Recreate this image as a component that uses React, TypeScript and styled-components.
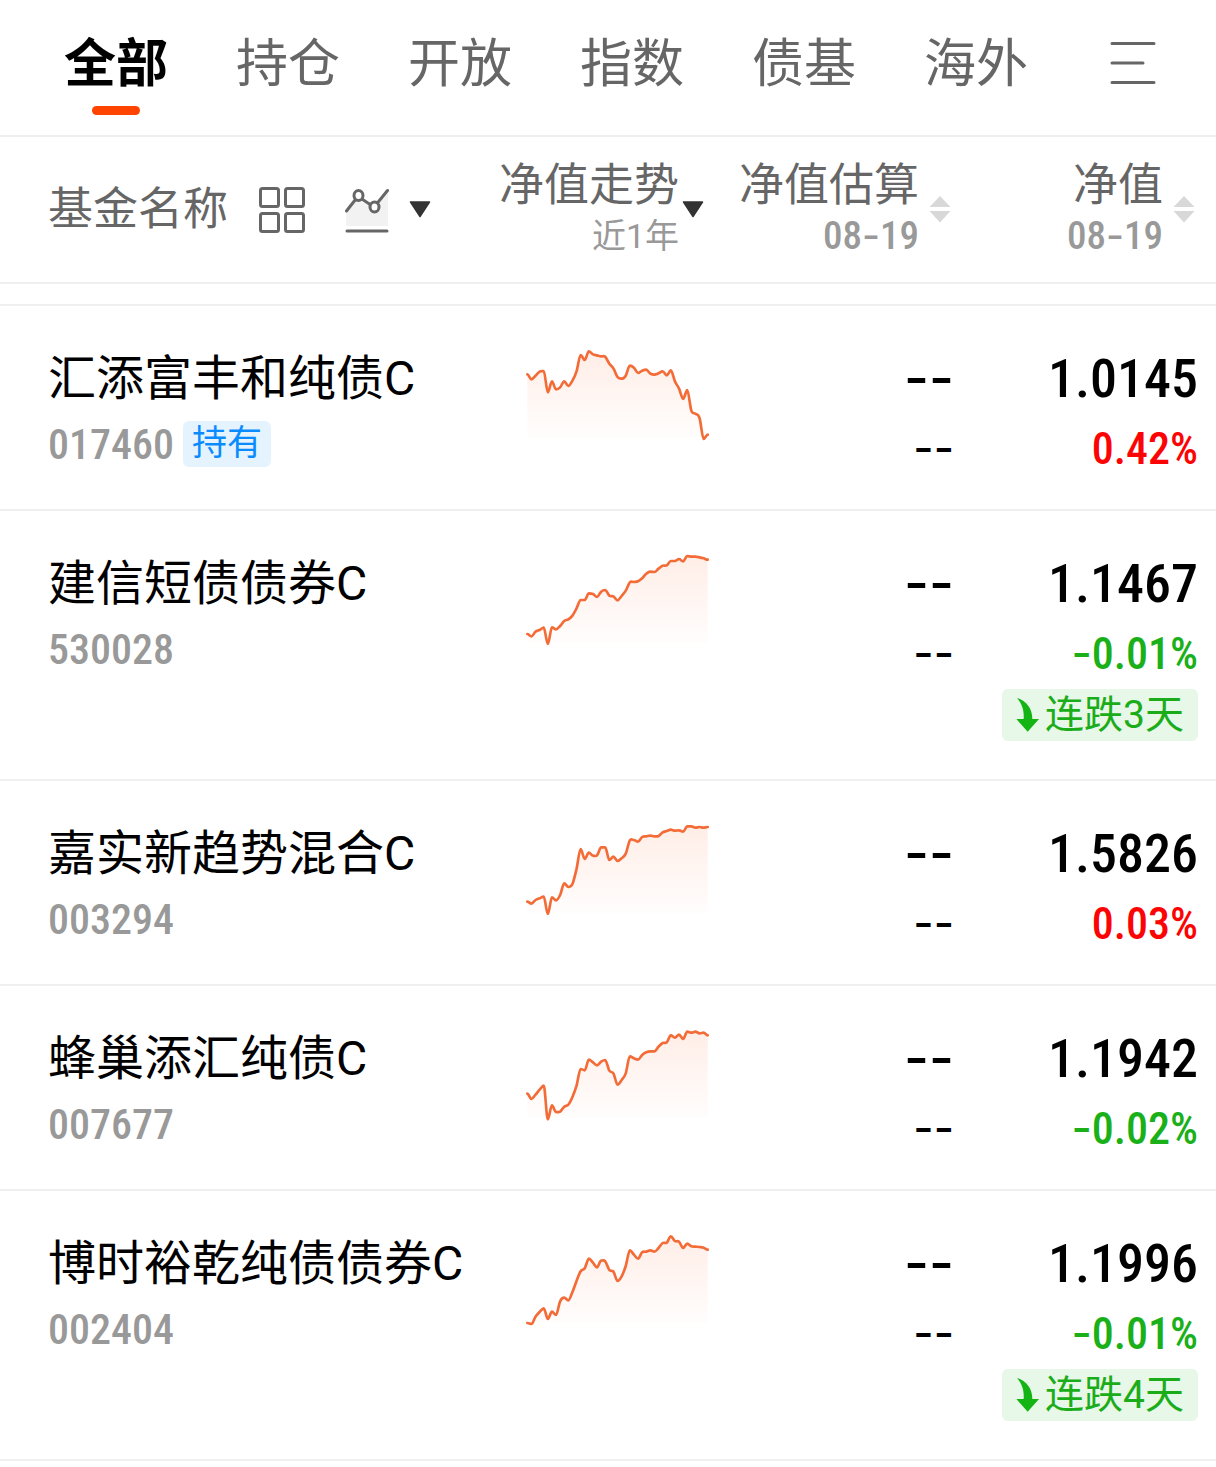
import React from "react";
import styled, { createGlobalStyle } from "styled-components";

const numeric = `"Roboto Condensed", "Liberation Sans Narrow", "Noto Sans CJK SC", sans-serif`;
const sans = `Roboto, "Noto Sans CJK SC", sans-serif`;

const GlobalStyle = createGlobalStyle`
  *, *::before, *::after { box-sizing: border-box; }
  body {
    margin: 0;
    background: #fff;
    color: #000;
    font-family: ${sans};
  }
  button {
    margin: 0;
    padding: 0;
    border: 0;
    background: none;
    color: inherit;
    font: inherit;
    cursor: pointer;
  }
`;

const Tabs = styled.nav`
  display: flex;
  align-items: flex-start;
  height: 137px;
  padding: 25px 60px 0 30px;
  border-bottom: 2px solid #efefef;
`;

const Tab = styled.button<{ $active?: boolean }>`
  flex: 0 0 172px;
  display: flex;
  flex-direction: column;
  align-items: center;
  gap: 1px;
  color: ${(p) => (p.$active ? "#000" : "#666")};
  font-size: 52px;
  font-weight: ${(p) => (p.$active ? 700 : 400)};
  line-height: 80px;

  &::after {
    content: "";
    width: 48px;
    height: 9px;
    border-radius: 5px;
    background: ${(p) => (p.$active ? "#ff4400" : "transparent")};
  }
`;

const MenuButton = styled.button`
  display: flex;
  margin: 16px 0 0 auto;
`;

const Table = styled.table`
  display: block;
`;

const Head = styled.thead`
  display: block;
  margin-bottom: 20px;
  border-bottom: 2px solid #efefef;
`;

const Body = styled.tbody`
  display: block;
  border-top: 2px solid #efefef;
`;

const columns = `
  display: grid;
  grid-template-columns: minmax(0, 1fr) 226px 246px 262px;
`;

const HeadRow = styled.tr`
  ${columns}
  height: 145px;
`;

const Row = styled.tr`
  ${columns}
  padding: 38px 0 25px;
  border-bottom: 2px solid #efefef;
`;

const NameHead = styled.th`
  display: flex;
  align-items: center;
  padding-left: 48px;
  color: #666;
  font-size: 45px;
  font-weight: 400;
  line-height: 52px;
`;

const IconButton = styled.button<{ $gap: number }>`
  display: flex;
  align-items: center;
  gap: 20px;
  margin-left: ${(p) => p.$gap}px;
`;

const ColumnHead = styled.th<{ $right: number }>`
  display: flex;
  justify-content: flex-end;
  align-items: center;
  padding-right: ${(p) => p.$right}px;
  font-weight: 400;
`;

const SortButton = styled.button<{ $gap: number }>`
  display: flex;
  align-items: center;
  gap: ${(p) => p.$gap}px;
  text-align: right;
  white-space: nowrap;
`;

const HeadText = styled.span`
  display: flex;
  flex-direction: column;
`;

const HeadTitle = styled.span`
  color: #666;
  font-size: 45px;
  line-height: 52px;
`;

const HeadSub = styled.span<{ $numeric?: boolean }>`
  color: #999;
  font-family: ${(p) => (p.$numeric ? numeric : sans)};
  font-size: ${(p) => (p.$numeric ? 39 : 34)}px;
  font-weight: ${(p) => (p.$numeric ? 500 : 400)};
  line-height: 48px;
`;

const NameCell = styled.th`
  padding: 0 0 0 48px;
  font-weight: 400;
  text-align: left;
  white-space: nowrap;
`;

const FundName = styled.div`
  font-size: 48px;
  line-height: 70px;
`;

const CodeLine = styled.div`
  display: flex;
  align-items: center;
  gap: 9px;
  height: 60px;
`;

const Code = styled.span`
  color: #999;
  font-family: ${numeric};
  font-size: 42px;
  font-weight: 500;
`;

const HoldBadge = styled.span`
  padding: 0 9px;
  border-radius: 6px;
  background: #e5f3ff;
  color: #0a8cff;
  font-size: 35px;
  line-height: 46px;
`;

const ChartCell = styled.td`
  padding: 4px 0 0 45px;
`;

const ChartSvg = styled.svg`
  display: block;
  overflow: visible;
`;

const ValueCell = styled.td<{ $right?: number }>`
  display: flex;
  flex-direction: column;
  align-items: flex-end;
  padding: 0 ${(p) => p.$right ?? 0}px 0 0;
  font-family: ${numeric};
  font-weight: 500;
`;

const Value = styled.span`
  font-size: 54px;
  line-height: 70px;
`;

const Change = styled.span<{ $color?: string }>`
  color: ${(p) => p.$color ?? "#000"};
  font-size: 44px;
  line-height: 70px;
`;

const Dash = styled.span`
  font-family: Inter, sans-serif;
  line-height: 0;
`;

const StreakTag = styled.span`
  display: flex;
  align-items: center;
  gap: 5px;
  height: 52px;
  margin-bottom: 13px;
  padding: 0 14px 0 14px;
  border-radius: 6px;
  background: #e7f7e8;
  color: #1aad19;
  font-family: ${sans};
  font-size: 39px;
  font-weight: 400;
  line-height: 52px;
`;

type Fund = {
  name: string;
  code: string;
  held?: boolean;
  value: string;
  change: string;
  streak?: string;
  trend: number[];
};

const funds: Fund[] = [
  {
    name: "汇添富丰和纯债C", code: "017460", held: true, value: "1.0145", change: "0.42%",
    trend: [118, 133, 122, 110, 108, 172, 139, 163, 157, 139, 153, 137, 109, 60, 75, 49, 58, 61, 64, 65, 86, 100, 126, 131, 122, 92, 98, 114, 107, 104, 116, 119, 115, 109, 121, 106, 139, 161, 192, 165, 227, 236, 249, 312, 299],
  },
  {
    name: "建信短债债券C", code: "530028", value: "1.1467", change: "-0.01%", streak: "连跌3天",
    trend: [282, 289, 275, 270, 263, 312, 262, 268, 258, 243, 238, 227, 205, 180, 180, 160, 162, 171, 155, 150, 167, 169, 181, 168, 152, 127, 126, 124, 115, 101, 95, 96, 86, 77, 76, 63, 63, 57, 64, 48, 50, 50, 52, 55, 59],
  },
  {
    name: "嘉实新趋势混合C", code: "003294", value: "1.5826", change: "0.03%",
    trend: [275, 281, 270, 265, 260, 312, 262, 271, 255, 220, 231, 222, 177, 117, 147, 128, 137, 136, 112, 112, 150, 140, 153, 145, 131, 91, 90, 95, 81, 79, 77, 79, 78, 67, 63, 59, 62, 61, 65, 49, 49, 53, 51, 53, 51],
  },
  {
    name: "蜂巢添汇纯债C", code: "007677", value: "1.1942", change: "-0.02%",
    trend: [236, 252, 239, 224, 212, 313, 271, 291, 290, 275, 269, 246, 212, 162, 166, 134, 142, 151, 140, 135, 167, 175, 209, 195, 175, 124, 130, 134, 120, 112, 109, 109, 95, 84, 82, 61, 68, 59, 72, 50, 53, 50, 55, 53, 61],
  },
  {
    name: "博时裕乾纯债债券C", code: "002404", value: "1.1996", change: "-0.01%", streak: "连跌4天",
    trend: [309, 312, 290, 276, 265, 297, 275, 285, 244, 233, 241, 216, 183, 154, 145, 116, 128, 142, 122, 124, 150, 155, 183, 169, 138, 91, 104, 116, 97, 95, 91, 95, 84, 69, 68, 49, 63, 65, 84, 71, 79, 80, 81, 83, 89],
  },
];

const STEP = 12.3;

function smoothLine(ys: number[]) {
  const slopes = ys.map((y, i) => {
    if (i === 0 || i === ys.length - 1) return 0;
    const before = y - ys[i - 1];
    const after = ys[i + 1] - y;
    return before * after <= 0 ? 0 : (before + after) / 2;
  });
  let path = `M0 ${ys[0]}`;
  for (let i = 1; i < ys.length; i++) {
    const x0 = (i - 1) * STEP;
    const x1 = i * STEP;
    const h = STEP / 3;
    path += `C${x0 + h} ${ys[i - 1] + slopes[i - 1] / 3} ${x1 - h} ${ys[i] - slopes[i] / 3} ${x1} ${ys[i]}`;
  }
  return path;
}

function TrendChart({ id, points }: { id: string; points: number[] }) {
  const line = smoothLine(points);
  const end = (points.length - 1) * STEP;
  return (
    <ChartSvg width="182" height="92" viewBox="-1 39 546 276" aria-hidden="true">
      <defs>
        <linearGradient id={id} x1="0" y1="45" x2="0" y2="310" gradientUnits="userSpaceOnUse">
          <stop offset="0" stopColor="#ff6a33" stopOpacity="0.12" />
          <stop offset="1" stopColor="#ff6a33" stopOpacity="0.01" />
        </linearGradient>
      </defs>
      <path d={`${line}L${end} 310L0 310Z`} fill={`url(#${id})`} />
      <path d={line} fill="none" stroke="#f36c37" strokeWidth="8" strokeLinecap="round" strokeLinejoin="round" />
    </ChartSvg>
  );
}

function Down() {
  return (
    <svg width="22" height="17" viewBox="0 0 22 17" aria-hidden="true">
      <path d="M1.5 1h19L11 15.5z" fill="#333" stroke="#333" strokeWidth="1.5" strokeLinejoin="round" />
    </svg>
  );
}

function Sort() {
  return (
    <svg width="22" height="28" viewBox="0 0 22 28" aria-hidden="true">
      <path d="M11 0L21.5 11H.5zM.5 15h21L11 26.5z" fill="#d8d8d8" />
    </svg>
  );
}

function Numeric({ text }: { text: string }) {
  return (
    <span>
      {text.split(/(-+)/).map((part, i) => (part.startsWith("-") ? <Dash key={i}>{part}</Dash> : part))}
    </span>
  );
}

const tabs = ["全部", "持仓", "开放", "指数", "债基", "海外"];

export default function App() {
  return (
    <>
      <GlobalStyle />
      <Tabs>
        {tabs.map((tab, i) => (
          <Tab key={tab} type="button" $active={i === 0}>{tab}</Tab>
        ))}
        <MenuButton type="button" aria-label="更多">
          <svg width="46" height="44" viewBox="0 0 46 44" fill="none" stroke="#666" strokeWidth="3" strokeLinecap="round">
            <path d="M2 2.5H44M2 22H33M2 41.5H44" />
          </svg>
        </MenuButton>
      </Tabs>
      <Table>
        <Head>
          <HeadRow>
            <NameHead scope="col">
              基金名称
              <IconButton type="button" aria-label="网格" $gap={31}>
                <svg width="46" height="46" viewBox="0 0 46 46" fill="none" stroke="#666" strokeWidth="3">
                  <rect x="1.5" y="1.5" width="18" height="18" rx="2" />
                  <rect x="26.5" y="1.5" width="18" height="18" rx="2" />
                  <rect x="1.5" y="26.5" width="18" height="18" rx="2" />
                  <rect x="26.5" y="26.5" width="18" height="18" rx="2" />
                </svg>
              </IconButton>
              <IconButton type="button" aria-label="走势图" $gap={40}>
                <svg width="44" height="46" viewBox="0 0 44 46" fill="none" stroke="#666" strokeWidth="3">
                  <path d="M1 25L10 13L25 18L43 5V39H1Z" fill="#f2f2f2" stroke="none" />
                  <path d="M1.5 24L10.5 12.5M16 11.5L26 18M32 16.5L42.5 3.5" strokeLinecap="round" />
                  <ellipse cx="13.5" cy="8.5" rx="4.5" ry="5" fill="#fff" />
                  <ellipse cx="29.5" cy="20" rx="4.5" ry="5" fill="#fff" />
                  <path d="M2 44H42" strokeLinecap="round" />
                </svg>
                <Down />
              </IconButton>
            </NameHead>
            <ColumnHead scope="col" $right={4}>
              <SortButton type="button" $gap={3}>
                <HeadText>
                  <HeadTitle>净值走势</HeadTitle>
                  <HeadSub>近1年</HeadSub>
                </HeadText>
                <Down />
              </SortButton>
            </ColumnHead>
            <ColumnHead scope="col" $right={3}>
              <SortButton type="button" $gap={10}>
                <HeadText>
                  <HeadTitle>净值估算</HeadTitle>
                  <HeadSub $numeric><Numeric text="08-19" /></HeadSub>
                </HeadText>
                <Sort />
              </SortButton>
            </ColumnHead>
            <ColumnHead scope="col" $right={21}>
              <SortButton type="button" $gap={10}>
                <HeadText>
                  <HeadTitle>净值</HeadTitle>
                  <HeadSub $numeric><Numeric text="08-19" /></HeadSub>
                </HeadText>
                <Sort />
              </SortButton>
            </ColumnHead>
          </HeadRow>
        </Head>
        <Body>
          {funds.map((fund) => (
            <Row key={fund.code}>
              <NameCell scope="row">
                <FundName>{fund.name}</FundName>
                <CodeLine>
                  <Code>{fund.code}</Code>
                  {fund.held && <HoldBadge>持有</HoldBadge>}
                </CodeLine>
              </NameCell>
              <ChartCell>
                <TrendChart id={`trend-${fund.code}`} points={fund.trend} />
              </ChartCell>
              <ValueCell>
                <Value><Numeric text="--" /></Value>
                <Change><Numeric text="--" /></Change>
              </ValueCell>
              <ValueCell $right={18}>
                <Value>{fund.value}</Value>
                <Change $color={fund.change.startsWith("-") ? "#1ab01a" : "#fc0404"}>
                  <Numeric text={fund.change} />
                </Change>
                {fund.streak && (
                  <StreakTag>
                    <svg width="24" height="34" viewBox="0 0 72 102" aria-hidden="true">
                      <path d="M3 0C32 9 49 32 49 63H69L35 101L1 63H23C25 42 20 20 3 0Z" fill="#14b414" />
                    </svg>
                    {fund.streak}
                  </StreakTag>
                )}
              </ValueCell>
            </Row>
          ))}
        </Body>
      </Table>
    </>
  );
}
